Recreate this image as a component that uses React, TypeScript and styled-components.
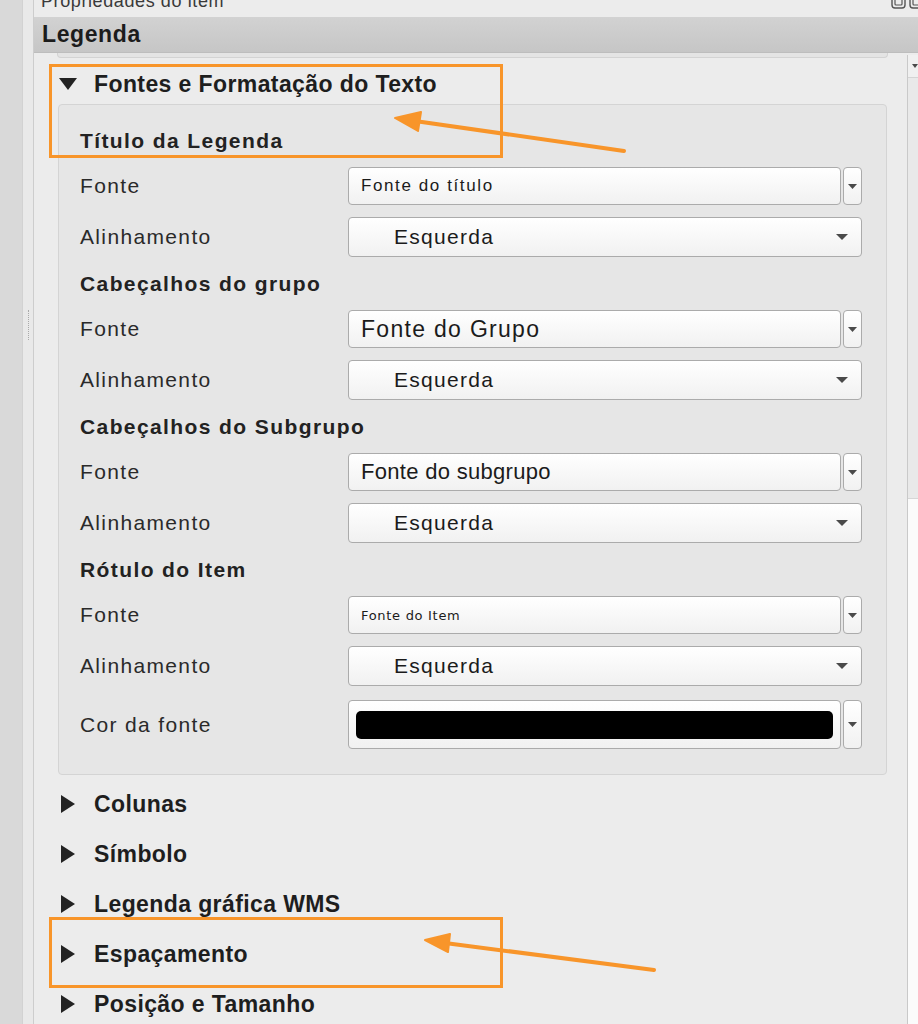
import React from 'react'
import styled, { createGlobalStyle } from 'styled-components'

const GlobalStyle = createGlobalStyle`
  html, body {
    margin: 0;
    padding: 0;
    background: #ececec;
    overflow: hidden;
  }
  body {
    font-family: "Liberation Sans", Arial, sans-serif;
    color: #262626;
  }
`;

const ORANGE = '#f8952a';

// Layout shell
const Screen = styled.div`
  position: relative;
  display: flex;
  width: 918px;
  height: 1024px;
  overflow: hidden;
  background: #ececec;
`;

const LeftRail = styled.div`
  width: 22px;
  flex-shrink: 0;
  background: #d9d9d9;
  border-right: 1px solid #d2d2d2;
`;

const Splitter = styled.div`
  width: 11px;
  flex-shrink: 0;
  background: #e9e9e9;
  border-right: 1px solid #cdcdcd;
  display: flex;
  justify-content: center;
  padding-top: 310px;
  box-sizing: border-box;
`;

const Grip = styled.div`
  width: 0;
  height: 30px;
  border-left: 1px dotted #a9a9a9;
`;

const Dock = styled.div`
  flex: 1;
  display: flex;
  flex-direction: column;
  min-width: 0;
`;

const TitleBar = styled.div`
  height: 17px;
  flex-shrink: 0;
  display: flex;
  justify-content: space-between;
  overflow: hidden;
  padding-left: 7px;
`;

const TitleText = styled.span`
  font-size: 18px;
  line-height: 18px;
  letter-spacing: 0.6px;
  color: #3a3a3a;
  margin-top: -8px;
`;

const TitleButtons = styled.div`
  display: flex;
  gap: 3px;
  margin-top: -6px;
  margin-right: -6px;
`;

const LegendBar = styled.div`
  height: 36px;
  flex-shrink: 0;
  display: flex;
  align-items: center;
  padding-left: 8px;
  background: linear-gradient(#d2d2d2, #c6c6c6);
  border-bottom: 1px solid #bdbdbd;
  box-sizing: border-box;
`;

const LegendTitle = styled.span`
  font-size: 23px;
  font-weight: bold;
  letter-spacing: 0.6px;
  color: #1c1c1c;
`;

const Body = styled.div`
  flex: 1;
  display: flex;
  min-height: 0;
  overflow: hidden;
`;

const ScrollContent = styled.div`
  flex: 1;
  display: flex;
  flex-direction: column;
  padding: 0 20px 0 24px;

  & > * {
    flex-shrink: 0;
  }
`;

// Scroll bar
const ScrollBar = styled.div`
  width: 10px;
  flex-shrink: 0;
  display: flex;
  flex-direction: column;
  margin-top: 2px;
  border-left: 1px solid #c9c9c9;
`;

const ScrollArrow = styled.div`
  height: 22px;
  display: flex;
  align-items: center;
  justify-content: flex-end;
  background: #f0f0f0;
  border-bottom: 1px solid #d4d4d4;
`;

const ScrollThumb = styled.div`
  height: 420px;
  background: #e9e9e9;
  border-bottom: 1px solid #d6d6d6;
`;

const ScrollTrack = styled.div`
  flex: 1;
  background: #fbfbfb;
`;

// Collapsible groups
const PrevFrameEnd = styled.div`
  height: 4px;
  margin: 0 -1px;
  background: #e4e4e4;
  border: 1px solid #d3d3d3;
  border-top: none;
  border-radius: 0 0 4px 4px;
`;

const SectionHeader = styled.div<{ $open?: boolean }>`
  height: ${(p) => (p.$open ? '40px' : '50px')};
  margin-top: ${(p) => (p.$open ? '6px' : '0')};
  display: flex;
  align-items: center;
  gap: 17px;
  padding-left: 1px;
`;

const Caret = styled.span`
  width: 18px;
  display: flex;
  justify-content: center;
  flex-shrink: 0;
`;

const SectionTitle = styled.span`
  font-size: 23px;
  font-weight: bold;
  letter-spacing: 0.4px;
  color: #1e1e1e;
`;

const GroupBox = styled.div`
  background: #e6e6e6;
  border: 1px solid #d4d4d4;
  border-radius: 4px;
  padding: 21px 24px 25px 21px;
  margin-bottom: 4px;
  display: flex;
  flex-direction: column;
  gap: 12px;
`;

const SubHeading = styled.div`
  height: 29px;
  display: flex;
  align-items: center;
  font-size: 21px;
  font-weight: bold;
  letter-spacing: 1.4px;
  color: #222;
`;

const FieldRow = styled.div<{ $h: number; $offset?: number }>`
  height: ${(p) => p.$h}px;
  margin-top: ${(p) => p.$offset ?? 0}px;
  display: grid;
  grid-template-columns: 268px 1fr;
  align-items: center;
`;

const Label = styled.span`
  font-size: 21px;
  letter-spacing: 1.35px;
  color: #2a2a2a;
`;

const Combo = styled.div`
  display: flex;
  gap: 2px;
  height: 100%;
`;

const ComboBox = styled.div<{ $indent?: number }>`
  flex: 1;
  display: flex;
  align-items: center;
  justify-content: space-between;
  box-sizing: border-box;
  padding: 0 13px 0 ${(p) => p.$indent ?? 12}px;
  background: linear-gradient(#ffffff, #f1f1f1);
  border: 1px solid #ababab;
  border-radius: 4px;
  min-width: 0;
`;

const DropButton = styled.div`
  width: 19px;
  flex-shrink: 0;
  display: flex;
  align-items: center;
  justify-content: center;
  box-sizing: border-box;
  background: linear-gradient(#ffffff, #f1f1f1);
  border: 1px solid #ababab;
  border-radius: 4px;
`;

const ComboText = styled.span<{ $size: number; $spacing?: number; $mono?: boolean }>`
  font-size: ${(p) => p.$size}px;
  letter-spacing: ${(p) => p.$spacing ?? 0}px;
  font-family: ${(p) => (p.$mono ? '"DejaVu Sans", Verdana, sans-serif' : '"Liberation Sans", Arial, sans-serif')};
  color: #1b1b1b;
  white-space: nowrap;
`;

const ColorSwatch = styled.div`
  flex: 1;
  height: 28px;
  margin-left: -5px;
  margin-right: -6px;
  background: #000;
  border-radius: 5px;
`;

// Annotation layer (drawn over the page)
const Annotations = styled.svg`
  position: absolute;
  inset: 0;
  pointer-events: none;
`;

const DownCaret = ({ w = 18, h = 12 }: { w?: number; h?: number }) => (
  <svg width={w} height={h} viewBox={`0 0 ${w} ${h}`}>
    <polygon points={`0,0 ${w},0 ${w / 2},${h}`} fill="#222" />
  </svg>
);

const RightCaret = () => (
  <svg width="14" height="18" viewBox="0 0 14 18">
    <polygon points="0,0 14,9 0,18" fill="#222" />
  </svg>
);

const SmallArrow = ({ w = 10, h = 6 }: { w?: number; h?: number }) => (
  <svg width={w} height={h} viewBox={`0 0 ${w} ${h}`}>
    <polygon points={`0,0 ${w},0 ${w / 2},${h}`} fill="#4a4a4a" />
  </svg>
);

const DockIcon = () => (
  <svg width="15" height="15" viewBox="0 0 15 15">
    <rect x="1" y="1" width="13" height="13" rx="3" fill="none" stroke="#555" strokeWidth="1.4" />
    <rect x="4" y="4" width="7" height="7" rx="1" fill="none" stroke="#555" strokeWidth="1.2" />
  </svg>
);

type Field = { text: string; size: number; spacing?: number; mono?: boolean }

const groups: { title: string; font: Field }[] = [
  { title: 'Título da Legenda', font: { text: 'Fonte do título', size: 17, spacing: 1.6 } },
  { title: 'Cabeçalhos do grupo', font: { text: 'Fonte do Grupo', size: 23, spacing: 1.3 } },
  { title: 'Cabeçalhos do Subgrupo', font: { text: 'Fonte do subgrupo', size: 22, spacing: 0.3 } },
  { title: 'Rótulo do Item', font: { text: 'Fonte do Item', size: 13, spacing: 0.7, mono: true } },
]

const collapsed = ['Colunas', 'Símbolo', 'Legenda gráfica WMS', 'Espaçamento', 'Posição e Tamanho']

function FontCombo({ field }: { field: Field }) {
  return (
    <Combo>
      <ComboBox>
        <ComboText $size={field.size} $spacing={field.spacing} $mono={field.mono}>
          {field.text}
        </ComboText>
      </ComboBox>
      <DropButton>
        <SmallArrow w={9} h={5} />
      </DropButton>
    </Combo>
  )
}

function AlignCombo() {
  return (
    <Combo>
      <ComboBox $indent={45}>
        <ComboText $size={21} $spacing={1.3}>Esquerda</ComboText>
        <SmallArrow w={12} h={6} />
      </ComboBox>
    </Combo>
  )
}

export default function App() {
  return (
    <>
      <GlobalStyle />
      <Screen>
        <LeftRail />
        <Splitter>
          <Grip />
        </Splitter>
        <Dock>
          <TitleBar>
            <TitleText>Propriedades do item</TitleText>
            <TitleButtons>
              <DockIcon />
              <DockIcon />
            </TitleButtons>
          </TitleBar>
          <LegendBar>
            <LegendTitle>Legenda</LegendTitle>
          </LegendBar>
          <Body>
            <ScrollContent>
              <PrevFrameEnd />
              <SectionHeader $open>
                <Caret>
                  <DownCaret />
                </Caret>
                <SectionTitle>Fontes e Formatação do Texto</SectionTitle>
              </SectionHeader>
              <GroupBox>
                {groups.map((g) => (
                  <React.Fragment key={g.title}>
                    <SubHeading>{g.title}</SubHeading>
                    <FieldRow $h={38}>
                      <Label>Fonte</Label>
                      <FontCombo field={g.font} />
                    </FieldRow>
                    <FieldRow $h={40}>
                      <Label>Alinhamento</Label>
                      <AlignCombo />
                    </FieldRow>
                  </React.Fragment>
                ))}
                <FieldRow $h={49} $offset={2}>
                  <Label>Cor da fonte</Label>
                  <Combo>
                    <ComboBox>
                      <ColorSwatch />
                    </ComboBox>
                    <DropButton>
                      <SmallArrow w={9} h={5} />
                    </DropButton>
                  </Combo>
                </FieldRow>
              </GroupBox>
              {collapsed.map((t) => (
                <SectionHeader key={t}>
                  <Caret>
                    <RightCaret />
                  </Caret>
                  <SectionTitle>{t}</SectionTitle>
                </SectionHeader>
              ))}
            </ScrollContent>
            <ScrollBar>
              <ScrollArrow>
                <SmallArrow w={6} h={4} />
              </ScrollArrow>
              <ScrollThumb />
              <ScrollTrack />
            </ScrollBar>
          </Body>
        </Dock>

        <Annotations width="918" height="1024" viewBox="0 0 918 1024">
          <rect x="50.5" y="65.5" width="451" height="91" fill="none" stroke={ORANGE} strokeWidth="3" />
          <line x1="624" y1="151" x2="415" y2="121" stroke={ORANGE} strokeWidth="4" strokeLinecap="round" />
          <polygon points="395,118 418,131 421,112" fill={ORANGE} stroke={ORANGE} strokeWidth="2" strokeLinejoin="round" />

          <rect x="50.5" y="918.5" width="451" height="68" fill="none" stroke={ORANGE} strokeWidth="3" />
          <line x1="654" y1="970" x2="445" y2="943" stroke={ORANGE} strokeWidth="4" strokeLinecap="round" />
          <polygon points="425,940 448,952 450,934" fill={ORANGE} stroke={ORANGE} strokeWidth="2" strokeLinejoin="round" />
        </Annotations>
      </Screen>
    </>
  )
}
